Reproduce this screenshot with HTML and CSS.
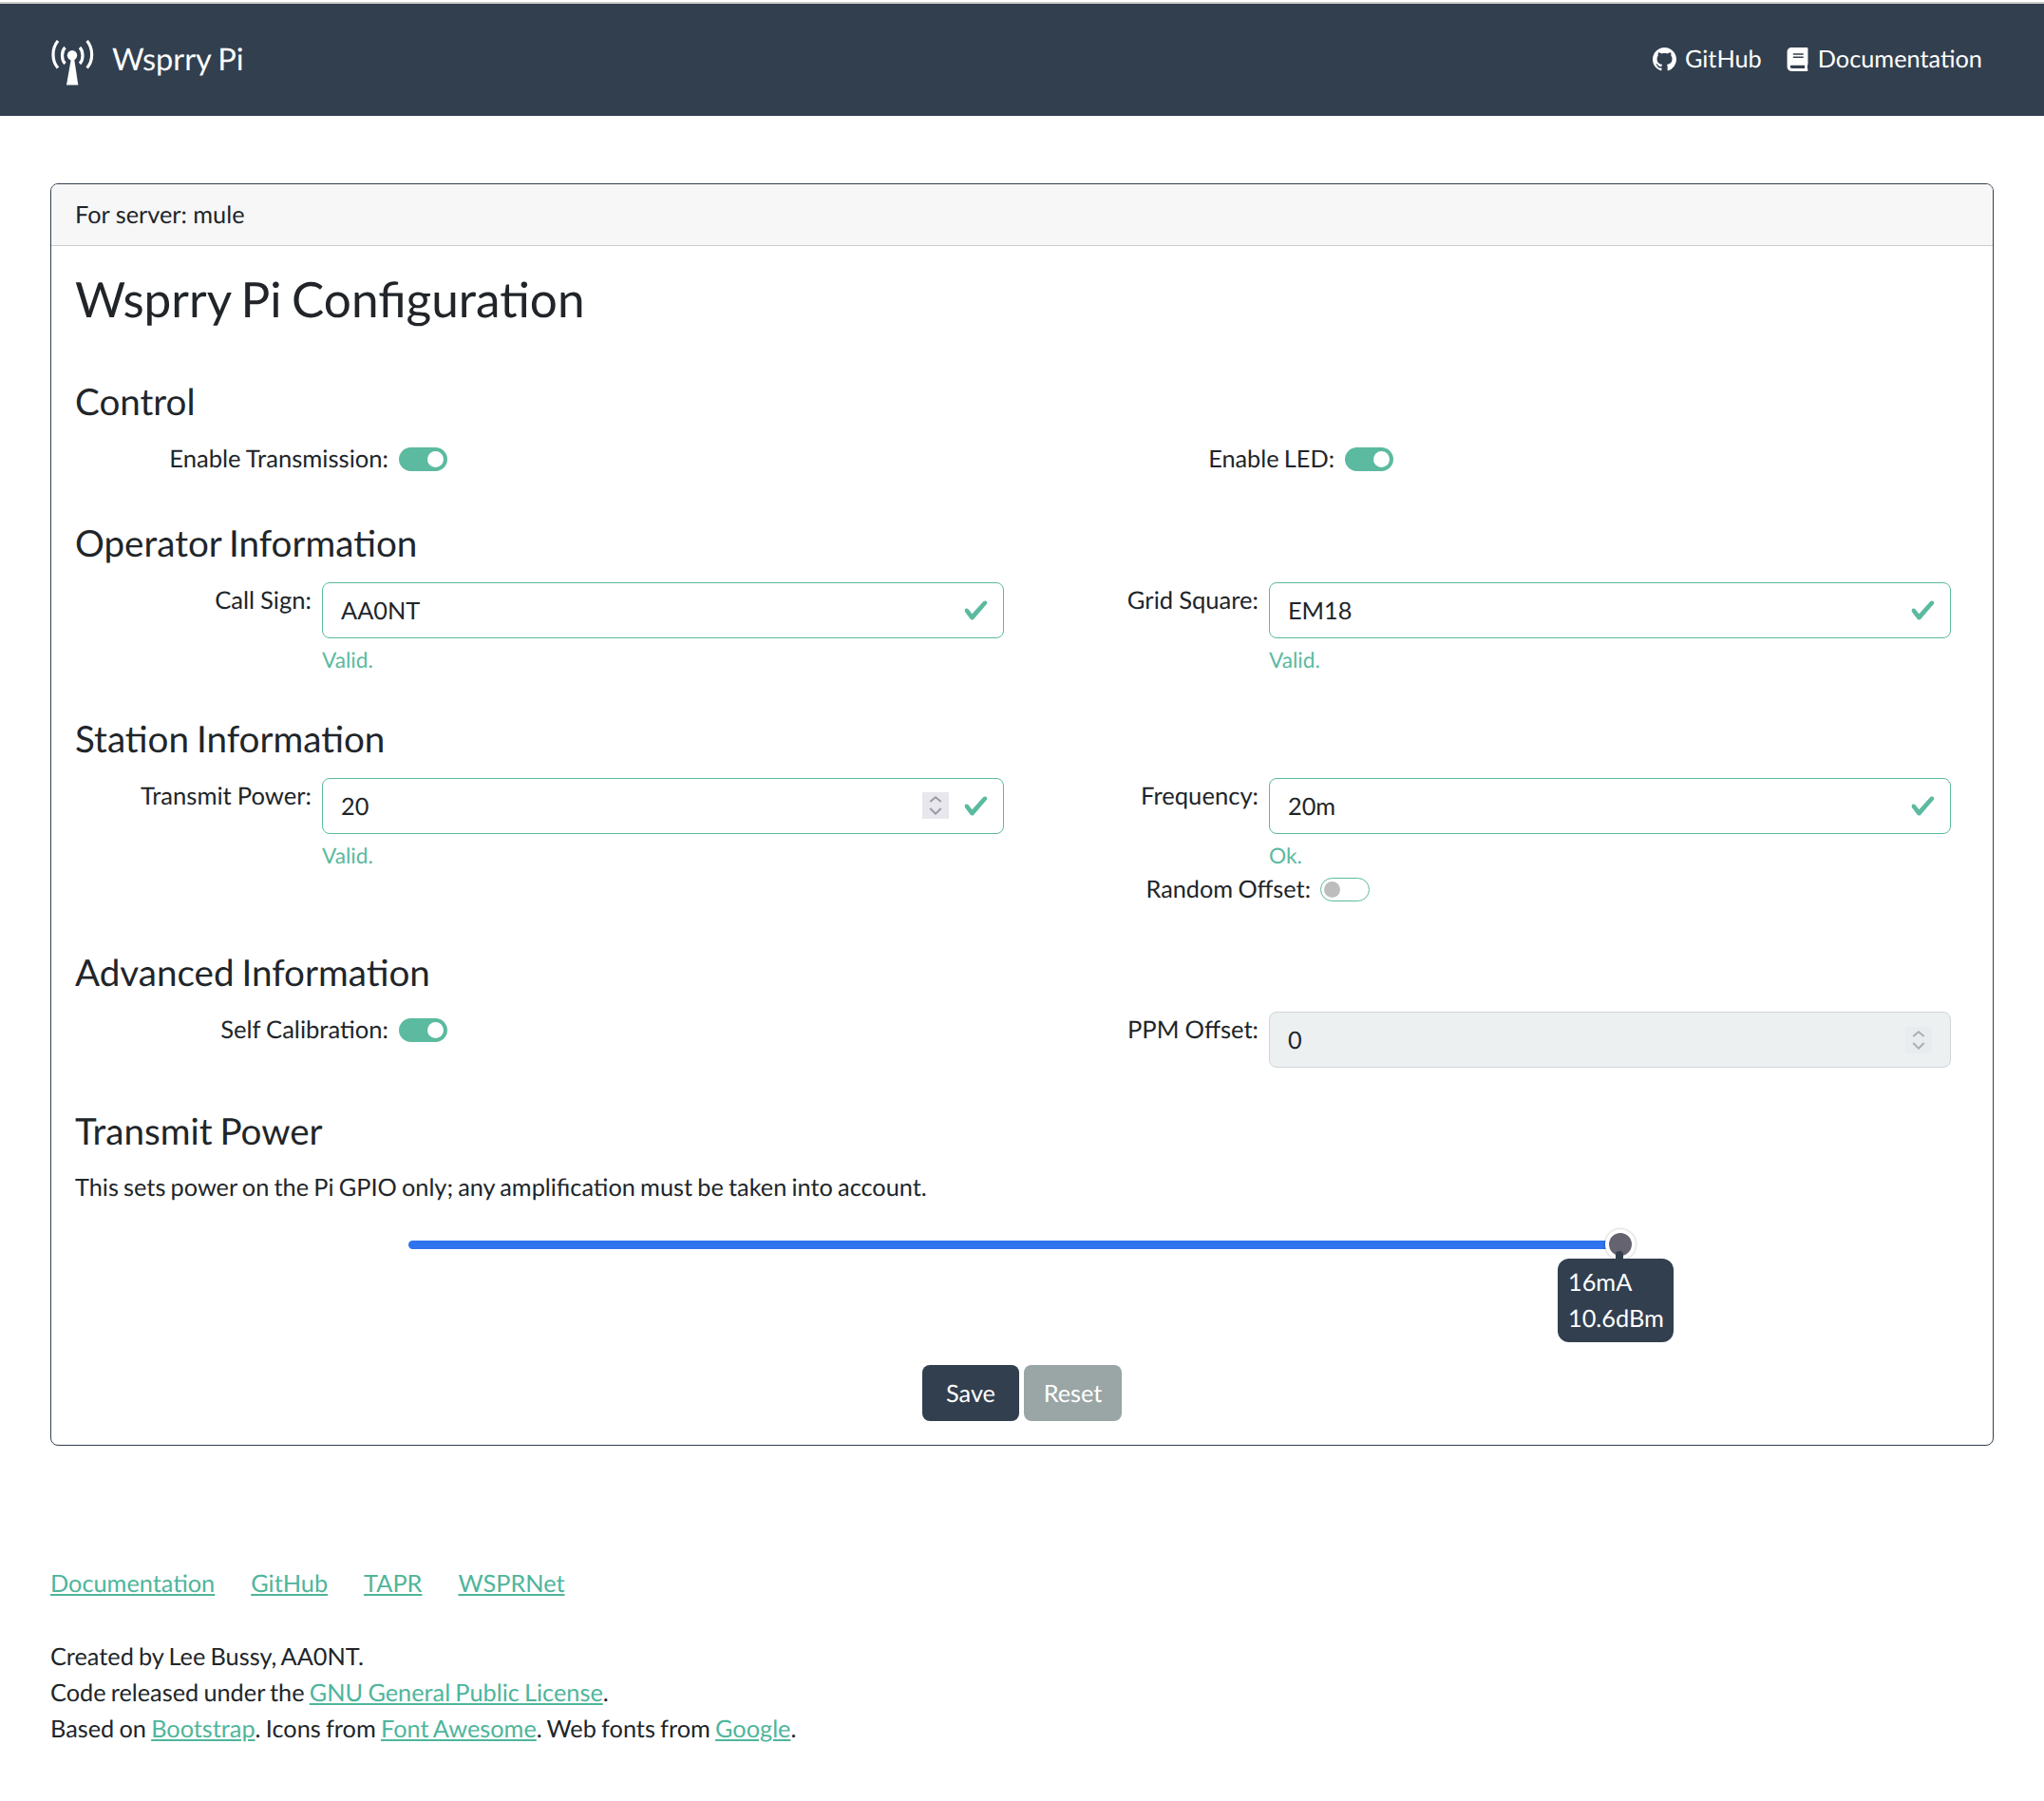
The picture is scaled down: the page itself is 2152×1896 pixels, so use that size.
FILE: index.html
```html
<!DOCTYPE html>
<html>
<head>
    <title>Wsprry Pi Configuration</title>
    <meta name="viewport" content="width=device-width, initial-scale=1.0">
    <link rel="stylesheet" href="styles.css">
</head>
<body>
    <nav class="navbar">
        <a class="brand" href="#">
            <svg class="brand-icon" viewBox="7 12 49 48" fill="none" stroke="#fff" stroke-width="3.2">
                <path d="M16 13C9.3 21 9.3 34 16 41.5"/>
                <path d="M46.6 13c6.7 8 6.7 21 0 28.5"/>
                <path d="M23.5 20c-4 4-4 13 0 17"/>
                <path d="M39 20c4 4 4 13 0 17"/>
                <circle cx="31" cy="28.3" r="5.2" fill="#fff" stroke="none"/>
                <path d="M30 31h3l4.3 28.5H25z" fill="#fff" stroke="none"/>
            </svg>
            <span>Wsprry Pi</span>
        </a>
        <div class="nav-links">
            <a href="#">
                <svg class="nav-icon" viewBox="0 0 16 16" fill="#fff"><path d="M8 0C3.58 0 0 3.58 0 8c0 3.54 2.29 6.53 5.47 7.59.4.07.55-.17.55-.38 0-.19-.01-.82-.01-1.49-2.01.37-2.53-.49-2.69-.94-.09-.23-.48-.94-.82-1.13-.28-.15-.68-.52-.01-.53.63-.01 1.08.58 1.23.82.72 1.21 1.87.87 2.33.66.07-.52.28-.87.51-1.07-1.78-.2-3.64-.89-3.64-3.95 0-.87.31-1.59.82-2.15-.08-.2-.36-1.02.08-2.12 0 0 .67-.21 2.2.82.64-.18 1.32-.27 2-.27.68 0 1.36.09 2 .27 1.53-1.04 2.2-.82 2.2-.82.44 1.1.16 1.92.08 2.12.51.56.82 1.27.82 2.15 0 3.07-1.87 3.75-3.65 3.95.29.25.54.73.54 1.48 0 1.07-.01 1.93-.01 2.2 0 .21.15.46.55.38A8.013 8.013 0 0016 8c0-4.42-3.58-8-8-8z"/></svg>
                GitHub
            </a>
            <a href="#">
                <svg class="nav-icon" viewBox="0 0 448 512" fill="#fff"><path d="M448 360V24c0-13.3-10.7-24-24-24H96C43 0 0 43 0 96v320c0 53 43 96 96 96h328c13.3 0 24-10.7 24-24v-16c0-7.5-3.5-14.3-8.9-18.7-4.2-15.4-4.2-59.3 0-74.7 5.4-4.3 8.9-11.1 8.9-18.6zM128 134c0-3.3 2.7-6 6-6h212c3.3 0 6 2.7 6 6v20c0 3.3-2.7 6-6 6H134c-3.3 0-6-2.7-6-6v-20zm0 64c0-3.3 2.7-6 6-6h212c3.3 0 6 2.7 6 6v20c0 3.3-2.7 6-6 6H134c-3.3 0-6-2.7-6-6v-20zm253.4 250H96c-17.7 0-32-14.3-32-32 0-17.6 14.4-32 32-32h285.4c-1.9 17.1-1.9 46.9 0 64z"/></svg>
                Documentation
            </a>
        </div>
    </nav>

    <main class="container">
        <section class="card">
            <div class="card-header">For server: mule</div>
            <div class="card-body">
                <h1>Wsprry Pi Configuration</h1>

                <h3 class="section-control">Control</h3>
                <div class="row row-control">
                    <div class="toggle-row toggle-left">
                        <label>Enable Transmission:</label>
                        <span class="switch on"></span>
                    </div>
                    <div class="toggle-row toggle-led">
                        <label>Enable LED:</label>
                        <span class="switch on"></span>
                    </div>
                </div>

                <h3>Operator Information</h3>
                <div class="row">
                    <div class="field">
                        <label>Call Sign:</label>
                        <div class="input-wrap">
                            <input class="input valid" type="text" value="AA0NT">
                            <svg class="check" viewBox="0 0 8 8"><path d="M2.3 6.73L.6 4.53c-.4-1.04.46-1.4 1.1-.8l1.1 1.4 3.4-3.8c.6-.63 1.6-.27 1.2.7l-4 4.6c-.43.5-.8.4-1.1.1z"/></svg>
                        </div>
                        <div class="feedback">Valid.</div>
                    </div>
                    <div class="field">
                        <label>Grid Square:</label>
                        <div class="input-wrap">
                            <input class="input valid" type="text" value="EM18">
                            <svg class="check" viewBox="0 0 8 8"><path d="M2.3 6.73L.6 4.53c-.4-1.04.46-1.4 1.1-.8l1.1 1.4 3.4-3.8c.6-.63 1.6-.27 1.2.7l-4 4.6c-.43.5-.8.4-1.1.1z"/></svg>
                        </div>
                        <div class="feedback">Valid.</div>
                    </div>
                </div>

                <h3>Station Information</h3>
                <div class="row">
                    <div class="field">
                        <label>Transmit Power:</label>
                        <div class="input-wrap">
                            <input class="input valid" type="text" value="20">
                            <span class="spinner boxed">
                                <svg viewBox="0 0 14 20" fill="none" stroke-width="2"><path d="M1.3 6L7 1.3 12.7 6M1.3 13L7 18.7 12.7 13"/></svg>
                            </span>
                            <svg class="check" viewBox="0 0 8 8"><path d="M2.3 6.73L.6 4.53c-.4-1.04.46-1.4 1.1-.8l1.1 1.4 3.4-3.8c.6-.63 1.6-.27 1.2.7l-4 4.6c-.43.5-.8.4-1.1.1z"/></svg>
                        </div>
                        <div class="feedback">Valid.</div>
                    </div>
                    <div class="field">
                        <label>Frequency:</label>
                        <div class="input-wrap">
                            <input class="input valid" type="text" value="20m">
                            <svg class="check" viewBox="0 0 8 8"><path d="M2.3 6.73L.6 4.53c-.4-1.04.46-1.4 1.1-.8l1.1 1.4 3.4-3.8c.6-.63 1.6-.27 1.2.7l-4 4.6c-.43.5-.8.4-1.1.1z"/></svg>
                        </div>
                        <div class="feedback">Ok.</div>
                        <div class="toggle-row toggle-offset">
                            <label>Random Offset:</label>
                            <span class="switch off"></span>
                        </div>
                    </div>
                </div>

                <h3>Advanced Information</h3>
                <div class="row">
                    <div class="toggle-row toggle-left toggle-calibration">
                        <label>Self Calibration:</label>
                        <span class="switch on"></span>
                    </div>
                    <div class="field">
                        <label>PPM Offset:</label>
                        <div class="input-wrap">
                            <input class="input disabled" type="text" value="0" disabled>
                            <span class="spinner plain">
                                <svg viewBox="0 0 14 20" fill="none" stroke-width="2"><path d="M1.3 6L7 1.3 12.7 6M1.3 13L7 18.7 12.7 13"/></svg>
                            </span>
                        </div>
                    </div>
                </div>

                <h3>Transmit Power</h3>
                <p class="note">This sets power on the Pi GPIO only; any amplification must be taken into account.</p>

                <div class="slider">
                    <div class="slider-track"></div>
                    <div class="slider-thumb"></div>
                    <div class="slider-tip">
                        <div>16mA</div>
                        <div>10.6dBm</div>
                    </div>
                </div>

                <div class="buttons">
                    <button class="btn btn-save">Save</button>
                    <button class="btn btn-reset">Reset</button>
                </div>
            </div>
        </section>

        <footer class="footer">
            <div class="footer-links">
                <a href="#">Documentation</a>
                <a href="#">GitHub</a>
                <a href="#">TAPR</a>
                <a href="#">WSPRNet</a>
            </div>
            <p>Created by Lee Bussy, AA0NT.<br>
            Code released under the <a href="#">GNU General Public License</a>.<br>
            Based on <a href="#">Bootstrap</a>. Icons from <a href="#">Font Awesome</a>. Web fonts from <a href="#">Google</a>.</p>
        </footer>
    </main>
</body>
</html>
```

FILE: styles.css
```css
* {
    box-sizing: border-box;
}

body {
    margin: 0;
    padding-top: 2px;
    background-color: #fff;
    color: #212529;
    font-family: Lato, "Noto Sans", sans-serif;
    font-size: 25.3px;
    line-height: 38px;
    word-spacing: -1.25px;
    text-rendering: geometricPrecision;
}

a {
    color: #4fb59b;
}

label {
    font-size: 25.6px;
    word-spacing: -0.5px;
}

/* navbar */
.navbar {
    display: flex;
    align-items: center;
    justify-content: space-between;
    height: 120px;
    padding: 0 65px 2px 52px;
    background-color: #323f4f;
    border-top: 2px solid #ccc;
}

.navbar a {
    color: #fff;
    text-decoration: none;
}

.brand {
    display: flex;
    align-items: center;
    gap: 17px;
    font-size: 32.6px;
}

.brand-icon {
    width: 49px;
    height: 48px;
    margin-top: 8px;
}

.nav-links {
    display: flex;
    gap: 25px;
}

.nav-links a {
    display: flex;
    align-items: center;
    gap: 9px;
}

.nav-icon {
    height: 25px;
    width: 25px;
}

/* card */
.container {
    padding: 71px 53px 0;
}

.card {
    border: 1px solid #323f4f;
    border-radius: 8px;
    overflow: hidden;
}

.card-header {
    height: 65px;
    padding: 13px 25px;
    background-color: #f7f7f7;
    border-bottom: 1px solid #ccc;
    word-spacing: 0;
}

.card-body {
    padding: 0 25px 25px;
}

h1 {
    margin: 25px 0 0;
    font-size: 51.3px;
    font-weight: 400;
    line-height: 60px;
    word-spacing: -2.5px;
}

h3 {
    margin: 44px 0 0;
    font-size: 38.6px;
    font-weight: 400;
    line-height: 46px;
    word-spacing: -1.9px;
}

.section-control {
    margin-top: 56px;
}

.row {
    display: grid;
    grid-template-columns: 997px 997px;
    margin-top: 18px;
}

.row-control {
    margin-top: 18px;
    padding-bottom: 3px;
}

.field {
    display: grid;
    grid-template-columns: 249px 1fr;
    align-content: start;
    column-gap: 11px;
    padding-right: 19px;
}

.field label {
    text-align: right;
}

.toggle-row {
    display: flex;
    align-items: center;
    gap: 11px;
    height: 38px;
}

.toggle-row label {
    text-align: right;
}

.toggle-left label {
    width: 330px;
}

.toggle-led label {
    width: 329px;
    font-size: 25.3px;
    word-spacing: -1.25px;
}

.toggle-offset {
    grid-column: 1 / span 2;
    gap: 10px;
    margin-bottom: 2px;
}

.toggle-offset label {
    width: 304px;
    font-size: 25.3px;
    word-spacing: -1.25px;
}

.switch {
    position: relative;
    flex: none;
    display: block;
    width: 51px;
    height: 25px;
    border-radius: 13px;
}

.switch::after {
    content: "";
    position: absolute;
    top: 4px;
    width: 17px;
    height: 17px;
    border-radius: 50%;
}

.switch.on {
    background-color: #5bba9f;
}

.switch.on::after {
    right: 4px;
    background-color: #fff;
}

.switch.off {
    width: 52px;
    background-color: #fff;
    border: 1px solid #5bba9f;
}

.switch.off::after {
    left: 3px;
    top: 3px;
    background-color: #bdbdbd;
}

.input-wrap {
    position: relative;
    height: 59px;
}

.input {
    display: block;
    width: 100%;
    height: 100%;
    padding: 1px 19px 0;
    border: 1px solid #ced4da;
    border-radius: 8px;
    background-color: #fff;
    color: #212529;
    font-family: inherit;
    font-size: inherit;
    text-rendering: inherit;
}

.input.valid {
    border-color: #5bba9f;
}

.input.disabled {
    background-color: #edf0f1;
}

.check {
    position: absolute;
    top: 16px;
    right: 16px;
    width: 27px;
    height: 27px;
    fill: #5bba9f;
}

.spinner {
    position: absolute;
    top: 15px;
    display: flex;
    align-items: center;
    justify-content: center;
    width: 28px;
    height: 28px;
}

.spinner svg {
    width: 14px;
    height: 20px;
}

.spinner.boxed {
    right: 58px;
    background-color: #e8e7ee;
    stroke: #9b9aa6;
}

.spinner.plain {
    top: 16px;
    right: 20px;
    background-color: #e9ecee;
    stroke: #a9aeb3;
}

.feedback {
    grid-column: 2;
    margin-top: 7px;
    color: #5bba9f;
    font-size: 22.7px;
    line-height: 32px;
}

/* slider */
.note {
    margin: 17px 0 0;
}

.slider {
    position: relative;
    width: 1335px;
    height: 127px;
    margin: 25px 0 0 351px;
}

.slider-track {
    position: absolute;
    top: 12px;
    left: 0;
    width: 1270px;
    height: 9px;
    background-color: #2f73ee;
    border-radius: 5px;
}

.slider-thumb {
    position: absolute;
    top: 0;
    left: 1260px;
    width: 32px;
    height: 32px;
    background-color: #64636f;
    border: 4px solid #fff;
    border-radius: 50%;
    box-shadow: 0 0 3px rgba(0, 0, 0, 0.3);
}

.slider-tip {
    position: absolute;
    top: 31px;
    left: 1210px;
    width: 122px;
    height: 88px;
    padding: 6px 0 0 11px;
    background-color: #323f4f;
    border-radius: 12px;
    color: #fff;
}

.slider-tip::before {
    content: "";
    position: absolute;
    top: -8px;
    left: 61px;
    width: 8px;
    height: 12px;
    background-color: #323f4f;
    border-radius: 4px 4px 0 0;
}

.buttons {
    display: flex;
    justify-content: center;
    gap: 5px;
    margin-top: 16px;
}

.btn {
    width: 102px;
    height: 59px;
    border: 0;
    border-radius: 8px;
    color: #fff;
    font-family: inherit;
    font-size: inherit;
    text-rendering: inherit;
}

.btn-save {
    background-color: #323f4f;
}

.btn-reset {
    width: 103px;
    background-color: #9aa5a5;
}

/* footer */
.footer {
    padding-top: 126px;
}

.footer-links {
    display: flex;
    gap: 38px;
}

.footer p {
    margin: 39px 0 0;
}
```
